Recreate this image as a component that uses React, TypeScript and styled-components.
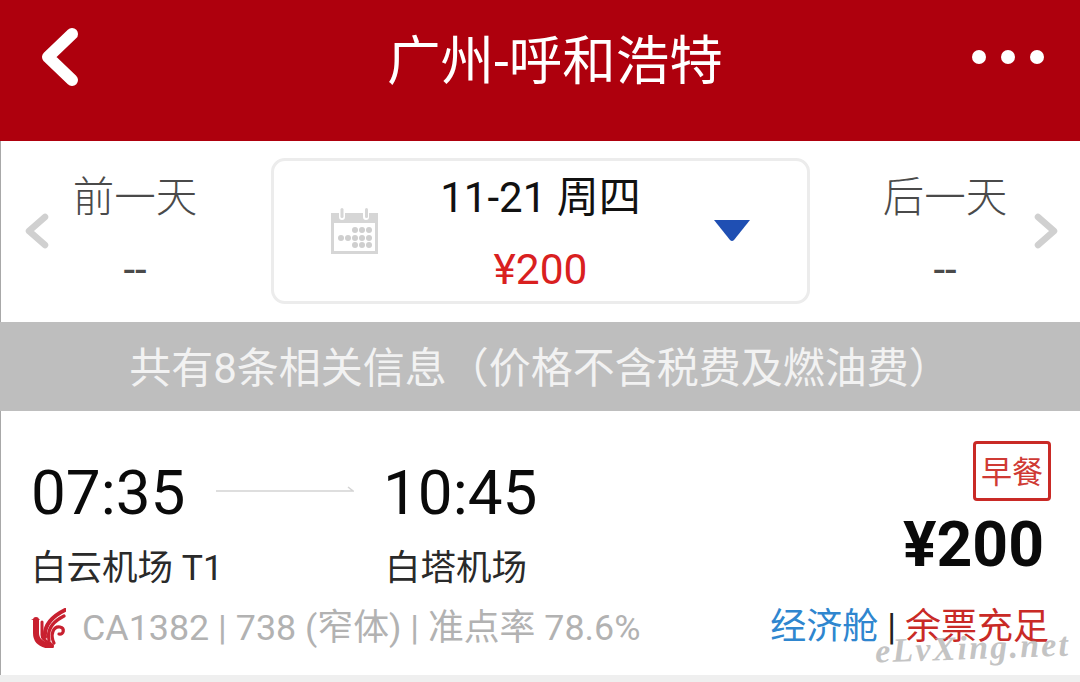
import React from "react";
import styled, { createGlobalStyle } from "styled-components";

const Global = createGlobalStyle`
  html, body { margin: 0; padding: 0; background: #fff; }
  body { width: 1080px; height: 682px; overflow: hidden; font-family: Roboto, "Noto Sans CJK SC", sans-serif; }
`;

const Page = styled.div`
  position: relative;
  width: 1080px;
  height: 682px;
  overflow: hidden;
  background: #fff;
  display: flex;
  flex-direction: column;
`;

const Header = styled.header`
  height: 141px;
  flex: none;
  background: #ae000d;
  display: flex;
  align-items: flex-start;
  padding: 0 35px 0 41px;
  box-sizing: border-box;
`;

const BackButton = styled.div`
  width: 38px;
  height: 58px;
  margin: 28px 308px 0 0;
  display: flex;
`;

const Title = styled.h1`
  margin: 29px 0 0;
  font-size: 53.5px;
  line-height: 66px;
  font-weight: 400;
  color: #fff;
  white-space: nowrap;
`;

const Dots = styled.div`
  display: flex;
  gap: 15px;
  margin: 50px 0 0 auto;
  width: 73px;
`;

const Dot = styled.span`
  width: 14px;
  height: 14px;
  border-radius: 50%;
  background: #fff;
`;

const Main = styled.div`
  flex: 1;
  display: flex;
  flex-direction: column;
  border-left: 1px solid #a8a8a8;
  min-height: 0;
`;

const DateBar = styled.section`
  height: 181px;
  flex: none;
  display: grid;
  grid-template-columns: 22px 26px 222px 539px 224px 24px 22px;
  align-items: start;
  box-sizing: border-box;
  padding-top: 17px;
`;

const Chevron = styled.div`
  width: 26px;
  height: 36px;
  margin-top: 55px;
  display: flex;
`;

const DayLink = styled.div<{ $side: "left" | "right" }>`
  display: flex;
  flex-direction: column;
  align-items: center;
  padding-${(p) => (p.$side === "left" ? "right: 50px" : "left: 46px")};
  color: #4a4a4a;
`;

const DayLabel = styled.div`
  font-size: 41.5px;
  line-height: 50px;
  margin-top: 15px;
  font-weight: 300;
  white-space: nowrap;
`;

const DayPrice = styled.div`
  font-size: 42px;
  line-height: 40px;
  margin-top: 27px;
`;

const DateBox = styled.div`
  height: 146px;
  box-sizing: border-box;
  border: 3px solid #ececec;
  border-radius: 14px;
  display: grid;
  grid-template-columns: 57px 46px 1fr 35px 58px;
  align-items: center;
`;

const DateIcon = styled.div`
  grid-column: 2;
  width: 47px;
  height: 46px;
  display: flex;
  margin-top: -1px;
`;

const DateCenter = styled.div`
  grid-column: 3;
  display: flex;
  flex-direction: column;
  align-items: center;
  padding-right: 10px;
  margin-top: 5px;
`;

const DateText = styled.div`
  font-size: 42px;
  line-height: 46px;
  color: #111;
  white-space: nowrap;
`;

const DatePrice = styled.div`
  font-size: 42.5px;
  line-height: 46px;
  color: #d9201f;
  margin-top: 26px;
`;

const Caret = styled.div`
  grid-column: 4;
  width: 36px;
  height: 22px;
  display: flex;
  margin-top: -1px;
`;

const InfoBar = styled.div`
  height: 89px;
  flex: none;
  background: #bebebe;
  color: #f2f2f2;
  font-size: 42px;
  line-height: 93px;
  text-align: center;
  white-space: nowrap;
  margin-left: -1px;
`;

const Card = styled.article`
  height: 264px;
  flex: none;
  box-sizing: border-box;
  padding: 30px 29px 0 30px;
  display: flex;
  justify-content: space-between;
`;

const Left = styled.div`
  display: flex;
  flex-direction: column;
`;

const Schedule = styled.div`
  display: grid;
  grid-template-columns: 153px 135px auto;
  column-gap: 32px;
  align-items: center;
`;

const Time = styled.div`
  font-size: 62px;
  line-height: 70px;
  margin-top: 17px;
  color: #0a0a0a;
`;

const FlightArrow = styled.div`
  width: 138px;
  height: 10px;
  display: flex;
  margin-top: 8px;
`;

const Station = styled.div<{ $indent?: number }>`
  font-size: 35.5px;
  line-height: 44px;
  color: #2a2a2a;
  margin: 18px 0 0 ${(p) => p.$indent ?? 0}px;
  white-space: nowrap;
`;

const Meta = styled.div`
  display: flex;
  align-items: center;
  gap: 15px;
  margin-top: 16px;
  color: #b2b2b2;
  font-size: 35.85px;
  line-height: 44px;
  white-space: nowrap;
`;

const Logo = styled.div`
  width: 35px;
  height: 40px;
  display: flex;
  margin-right: 1px;
`;

const Right = styled.div`
  display: flex;
  flex-direction: column;
  align-items: flex-end;
`;

const Tag = styled.div`
  width: 78px;
  height: 60px;
  box-sizing: border-box;
  border: 3px solid #c92a26;
  border-radius: 4px;
  color: #cf3a34;
  font-size: 31px;
  line-height: 58px;
  text-align: center;
  white-space: nowrap;
`;

const Price = styled.div`
  font-size: 62.5px;
  line-height: 70px;
  font-weight: 700;
  color: #0a0a0a;
  margin: 9px 7px 0 0;
`;

const Seats = styled.div`
  font-size: 36px;
  line-height: 44px;
  margin: 25px 2px 0 0;
  white-space: nowrap;
  color: #222;
`;

const Cabin = styled.span`
  color: #2f86cf;
`;

const Remain = styled.span`
  color: #c92a26;
`;

const BottomStrip = styled.div`
  flex: 1;
  margin-left: -1px;
  background: #efefef;
`;

const Watermark = styled.div`
  position: absolute;
  left: 875px;
  top: 628px;
  font-family: "Liberation Serif", serif;
  font-style: italic;
  font-weight: 700;
  font-size: 34px;
  line-height: 40px;
  letter-spacing: 2.2px;
  color: rgba(180, 180, 180, 0.8);
  white-space: nowrap;
  transform: rotate(-2deg);
`;

const PhoenixLogo = () => (
  <svg viewBox="0 0 35 40" width="35" height="40" fill="none" stroke="#c8202f" strokeLinecap="round">
    <path d="M0 11 H9 L6 14 Z" fill="#c8202f" stroke="none" />
    <path d="M5 12 V25 C5 33 11 37 20 38" strokeWidth="6" />
    <path d="M11 14 V27 C11 31 14 33 19 35" strokeWidth="3" />
    <path d="M14 29 C13 19 18 10 34 2" strokeWidth="4" />
    <path d="M18 32 C16 22 21 14 33 8" strokeWidth="3.2" />
    <path d="M23 35 C19 27 22 18 29 19 C34 20 33 27 28 26" strokeWidth="3.2" />
  </svg>
);

const dots: [number, number][] = [
  [24, 22], [31, 22], [38, 22],
  [10, 30], [17, 30], [24, 30], [31, 30], [38, 30],
  [24, 37], [31, 37], [38, 37],
];

const CalendarIcon = () => (
  <svg viewBox="0 0 47 46" width="47" height="46">
    <path d="M0 5 H8 V9 a3 3 0 0 0 6 0 V5 H32 V9 a3 3 0 0 0 6 0 V5 H47 V46 H0 Z" fill="#d6d6d6" />
    <rect x="9.5" y="0" width="3" height="10" rx="1.5" fill="#d6d6d6" />
    <rect x="34" y="0" width="3" height="10" rx="1.5" fill="#d6d6d6" />
    <rect x="3" y="15" width="41" height="28" fill="#fff" />
    {dots.map(([x, y]) => (
      <circle key={`${x}-${y}`} cx={x} cy={y} r="3" fill="#cfcfcf" />
    ))}
  </svg>
);

export default function App() {
  return (
    <Page>
      <Global />
      <Header>
        <BackButton>
          <svg viewBox="0 0 38 58" width="38" height="58">
            <path d="M31 6 L7 29 L31 52" stroke="#fff" strokeWidth="12" strokeLinecap="round" strokeLinejoin="round" fill="none" />
          </svg>
        </BackButton>
        <Title>广州-呼和浩特</Title>
        <Dots>
          <Dot />
          <Dot />
          <Dot />
        </Dots>
      </Header>
      <Main>
        <DateBar>
          <span />
          <Chevron>
            <svg viewBox="0 0 26 36" width="26" height="36">
              <path d="M22 4 L6 18 L22 32" stroke="#d0d0d0" strokeWidth="6.5" strokeLinecap="round" strokeLinejoin="round" fill="none" />
            </svg>
          </Chevron>
          <DayLink $side="left">
            <DayLabel>前一天</DayLabel>
            <DayPrice>--</DayPrice>
          </DayLink>
          <DateBox>
            <DateIcon>
              <CalendarIcon />
            </DateIcon>
            <DateCenter>
              <DateText>11-21 周四</DateText>
              <DatePrice>¥200</DatePrice>
            </DateCenter>
            <Caret>
              <svg viewBox="0 0 36 22" width="36" height="22">
                <path d="M0 0 H36 L20 20 Q18 22 16 20 Z" fill="#1f4fb3" />
              </svg>
            </Caret>
          </DateBox>
          <DayLink $side="right">
            <DayLabel>后一天</DayLabel>
            <DayPrice>--</DayPrice>
          </DayLink>
          <Chevron>
            <svg viewBox="0 0 26 36" width="26" height="36">
              <path d="M4 4 L20 18 L4 32" stroke="#d0d0d0" strokeWidth="6.5" strokeLinecap="round" strokeLinejoin="round" fill="none" />
            </svg>
          </Chevron>
        </DateBar>
        <InfoBar>共有8条相关信息（价格不含税费及燃油费）</InfoBar>
        <Card>
          <Left>
            <Schedule>
              <Time>07:35</Time>
              <FlightArrow>
                <svg viewBox="0 0 138 10" width="138" height="10">
                  <path d="M0 7 H137 L132 3" stroke="#d4d4d4" strokeWidth="1.5" fill="none" />
                </svg>
              </FlightArrow>
              <Time>10:45</Time>
              <Station>白云机场 T1</Station>
              <span />
              <Station $indent={2}>白塔机场</Station>
            </Schedule>
            <Meta>
              <Logo>
                <PhoenixLogo />
              </Logo>
              CA1382 | 738 (窄体) | 准点率 78.6%
            </Meta>
          </Left>
          <Right>
            <Tag>早餐</Tag>
            <Price>¥200</Price>
            <Seats>
              <Cabin>经济舱</Cabin> | <Remain>余票充足</Remain>
            </Seats>
          </Right>
        </Card>
        <BottomStrip />
      </Main>
      <Watermark>eLvXing.net</Watermark>
    </Page>
  );
}
